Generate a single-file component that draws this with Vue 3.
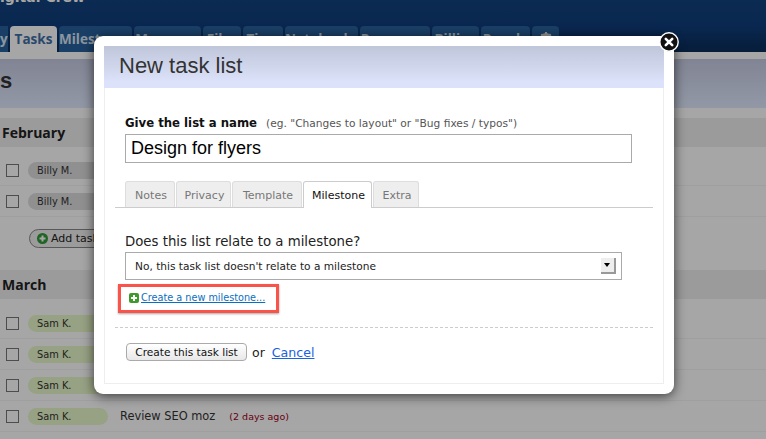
<script setup>
const tabs = [
  { label: 'y', width: 8 },
  { label: 'Tasks', width: 47, active: true },
  { label: 'Milestones', width: 73 },
  { label: 'Messages', width: 67 },
  { label: 'Files', width: 38 },
  { label: 'Time', width: 40 },
  { label: 'Notebooks', width: 73 },
  { label: 'Resources', width: 70 },
  { label: 'Billing', width: 47 },
  { label: 'People', width: 49 }
]

const modalTabs = [
  { label: 'Notes', width: 50 },
  { label: 'Privacy', width: 55 },
  { label: 'Template', width: 70 },
  { label: 'Milestone', width: 69, active: true },
  { label: 'Extra', width: 46 }
]
</script>

<template>
  <div class="page">
    <header class="top">
      <div class="brand">igital Crew</div>
      <nav class="tabs">
        <a
          v-for="t in tabs"
          :key="t.label"
          class="tab"
          :class="{ active: t.active, stub: t.label === 'y' }"
          :style="{ width: t.width + 'px' }"
        >{{ t.label }}</a>
        <a class="tab gear">
          <svg width="14" height="14" viewBox="0 0 14 14">
            <circle cx="7" cy="7" r="4.5" fill="none" stroke="#e4e4e4" stroke-width="3" />
            <path d="M6 0h2v3H6zM6 11h2v3H6zM0 6h3v2H0zM11 6h3v2h-3zM1.500 3L3 1.500 5 3.500 3.500 5zM9 3l2-1.500L12.500 3 11 5z" fill="#e4e4e4" />
          </svg>
        </a>
      </nav>
    </header>

    <div class="title-band">s</div>

    <h3 class="month feb">February</h3>
    <div class="row"><span class="check"></span><span class="pill">Billy M.</span></div>
    <div class="row"><span class="check"></span><span class="pill">Billy M.</span></div>
    <div class="add-wrap">
      <span class="add-task">
        <svg width="11" height="11" viewBox="0 0 11 11">
          <circle cx="5.500" cy="5.500" r="5.500" fill="#2f9a35" />
          <path d="M4.500 2.500h2v2h2v2h-2v2h-2v-2h-2v-2h2z" fill="#fff" />
        </svg>
        Add task
      </span>
    </div>

    <h3 class="month">March</h3>
    <div class="rows">
      <div class="row"><span class="check"></span><span class="pill sam">Sam K.</span></div>
      <div class="row"><span class="check"></span><span class="pill sam">Sam K.</span></div>
      <div class="row"><span class="check"></span><span class="pill sam">Sam K.</span></div>
      <div class="row">
        <span class="check"></span><span class="pill sam">Sam K.</span>
        <span class="task">Review SEO moz</span>
        <span class="late">(2 days ago)</span>
      </div>
    </div>

    <div class="overlay"></div>

    <div class="modal">
      <a class="close">
        <svg width="20" height="20" viewBox="0 0 20 20">
          <circle cx="10" cy="10" r="9.200" fill="#111" stroke="#fff" stroke-width="1.400" />
          <path d="M6.800 6.800l6.400 6.400M13.200 6.800l-6.400 6.400" stroke="#fff" stroke-width="2.600" stroke-linecap="round" />
        </svg>
      </a>
      <div class="inner">
        <h2 class="modal-head">New task list</h2>
        <div class="body">
          <div class="name-label">
            <b>Give the list a name</b>
            <span class="hint">(eg. "Changes to layout" or "Bug fixes / typos")</span>
          </div>
          <input class="name-input" value="Design for flyers" />

          <div class="modal-tabs">
            <a
              v-for="t in modalTabs"
              :key="t.label"
              class="modal-tab"
              :class="{ active: t.active }"
              :style="{ width: t.width + 'px' }"
            >{{ t.label }}</a>
          </div>

          <div class="question">Does this list relate to a milestone?</div>
          <div class="select-wrap">
            <select class="select">
              <option>No, this task list doesn't relate to a milestone</option>
            </select>
            <span class="arrow"></span>
          </div>

          <div class="highlight">
            <svg width="10" height="10" viewBox="0 0 10 10">
              <rect width="10" height="10" rx="2" fill="#3f9a2b" />
              <path d="M4 2h2v2h2v2H6v2H4V6H2V4h2z" fill="#fff" />
            </svg>
            <a class="new-link">Create a new milestone...</a>
          </div>

          <div class="actions">
            <button class="submit">Create this task list</button>
            <span class="or">or</span>
            <a class="cancel">Cancel</a>
          </div>
        </div>
      </div>
    </div>
  </div>
</template>

<style>
html, body {
  margin: 0;
  background: #fff;
}
</style>

<style scoped>
.page {
  position: relative;
  width: 766px;
  height: 439px;
  overflow: hidden;
  background: #fff;
  font-family: "DejaVu Sans", sans-serif;
  color: #222;
}

.top {
  height: 52px;
  background: linear-gradient(#12427f, #0f3d7b 50%, #0b2d59);
  overflow: hidden;
}

.brand {
  margin-top: -11px;
  height: 37px;
  font-size: 14px;
  line-height: 16px;
  font-weight: bold;
  color: #fff;
}

.tabs {
  display: flex;
  gap: 2px;
  height: 26px;
}

.tab {
  box-sizing: border-box;
  height: 26px;
  border-radius: 4px 4px 0 0;
  background: #28619d;
  color: #d8e6f6;
  font-family: "Open Sans", sans-serif;
  font-size: 13.500px;
  font-weight: bold;
  line-height: 27px;
  text-align: center;
  white-space: nowrap;
  overflow: hidden;
}

.tab.active {
  background: #fff;
  color: #3f6fa8;
}

.tab.stub {
  border-radius: 0;
  text-align: right;
  padding-right: 1px;
}

.gear {
  width: 27px;
  padding-top: 6px;
  line-height: 0;
}

.title-band {
  box-sizing: border-box;
  margin-top: 7px;
  height: 49px;
  background: linear-gradient(#c5cbe3, #e2eaff);
  font-family: "Liberation Sans", sans-serif;
  font-size: 22px;
  font-weight: bold;
  line-height: 44px;
  color: #333;
}

.month {
  margin: 10px 0 0;
  height: 29px;
  padding-left: 2px;
  background: #eeeeee;
  font-family: "Open Sans", sans-serif;
  font-size: 14px;
  line-height: 30px;
  font-weight: bold;
  color: #222;
}

.feb {
  margin-bottom: 8px;
}

.rows {
  margin-top: 9px;
}

.row {
  display: flex;
  align-items: center;
  box-sizing: border-box;
  height: 31px;
  border-bottom: 1px solid #f4f4f4;
  padding-left: 6px;
  font-size: 13px;
}

.check {
  box-sizing: border-box;
  width: 13px;
  height: 13px;
  border: 1px solid #777;
  background: #fff;
}

.pill {
  box-sizing: border-box;
  width: 80px;
  height: 17px;
  margin-left: 9px;
  padding-left: 9px;
  border-radius: 9px;
  background: #dedede;
  font-size: 9.800px;
  line-height: 17px;
  color: #333;
}

.pill.sam {
  background: #e8f8ca;
}

.task {
  margin-left: 12px;
  font-size: 11.400px;
  color: #333;
}

.late {
  margin-left: 14px;
  font-size: 9.500px;
  color: #a00018;
}

.add-wrap {
  height: 43px;
  padding: 12px 0 0 29px;
  box-sizing: border-box;
}

.add-task {
  display: flex;
  align-items: center;
  gap: 3px;
  box-sizing: border-box;
  width: 90px;
  height: 19px;
  padding-left: 7px;
  border: 1px solid #888;
  border-radius: 10px;
  background: #eee;
  font-size: 11px;
}

.overlay {
  position: absolute;
  inset: 0;
  background: rgba(0, 0, 0, 0.35);
}

.modal {
  position: absolute;
  left: 94px;
  top: 36px;
  box-sizing: border-box;
  width: 580px;
  height: 358px;
  padding: 10px;
  background: #fff;
  border-radius: 9px;
  box-shadow: 0 2px 12px rgba(0, 0, 0, 0.65);
}

.close {
  position: absolute;
  right: -5px;
  top: -4px;
  width: 20px;
  height: 20px;
  line-height: 0;
}

.inner {
  box-sizing: border-box;
  height: 338px;
  border: 1px solid #eee;
  border-top: 0;
}

.modal-head {
  box-sizing: border-box;
  height: 42px;
  margin: 0 -1px;
  padding-left: 15px;
  background: linear-gradient(#c0c6da, #dbe2f9 85%);
  font-family: "Liberation Sans", sans-serif;
  font-size: 22px;
  font-weight: normal;
  line-height: 40px;
  color: #333;
}

.body {
  padding: 27px 10px 0;
}

.name-label {
  margin-left: 10px;
  height: 19px;
  font-size: 11.700px;
  line-height: 16px;
  color: #111;
}

.hint {
  margin-left: 9px;
  font-size: 10.650px;
  color: #555;
}

.name-input {
  display: block;
  box-sizing: border-box;
  width: 507px;
  height: 29px;
  margin-left: 10px;
  padding: 0 5px;
  border: 1px solid #aaa;
  border-radius: 0;
  outline: none;
  font-family: "Liberation Sans", sans-serif;
  font-size: 18px;
  color: #000;
}

.modal-tabs {
  display: flex;
  gap: 1px;
  margin-top: 18px;
  padding-left: 10px;
  height: 27px;
  border-bottom: 1px solid #ccc;
  box-sizing: border-box;
}

.modal-tab {
  box-sizing: border-box;
  height: 26px;
  padding-left: 2px;
  border: 1px solid #ddd;
  border-bottom: 0;
  border-radius: 3px 3px 0 0;
  background: #eee;
  color: #777;
  font-size: 11px;
  line-height: 27px;
  text-align: center;
}

.modal-tab.active {
  height: 27px;
  border-color: #ccc;
  background: #fff;
  color: #111;
}

.question {
  margin: 26px 0 0 10px;
  height: 18px;
  font-size: 13.300px;
  line-height: 16px;
  color: #222;
}

.select-wrap {
  position: relative;
  width: 497px;
  margin-left: 10px;
}

.select {
  display: block;
  box-sizing: border-box;
  width: 100%;
  height: 28px;
  padding: 0 0 0 9px;
  border: 1px solid #aaa;
  border-radius: 0;
  background: #fff;
  appearance: none;
  font-family: "DejaVu Sans", sans-serif;
  font-size: 10.600px;
  color: #222;
}

.arrow {
  position: absolute;
  left: 476px;
  top: 6px;
  box-sizing: border-box;
  width: 15px;
  height: 16px;
  background: #eee;
  border-right: 2px solid #999;
  border-bottom: 2px solid #999;
}

.arrow::after {
  content: "";
  position: absolute;
  left: 3px;
  top: 5px;
  border: 3.500px solid transparent;
  border-top: 4px solid #000;
  border-bottom: 0;
}

.highlight {
  display: flex;
  align-items: center;
  gap: 2px;
  box-sizing: border-box;
  width: 161px;
  height: 29px;
  margin: 4px 0 0 3px;
  padding: 0 0 2px 8px;
  border: 3px solid #f9534a;
  box-shadow: 0 1px 2px rgba(0, 0, 0, 0.35);
}

.new-link {
  font-size: 9.700px;
  color: #0b6fc0;
  text-decoration: underline;
}

.actions {
  display: flex;
  align-items: center;
  margin-top: 14px;
  padding: 15px 0 0 11px;
  border-top: 1px dashed #ccc;
}

.submit {
  box-sizing: border-box;
  width: 121px;
  height: 18px;
  padding: 0;
  border: 1px solid #aaa;
  border-radius: 4px;
  background: linear-gradient(#fff, #e8e8e8);
  font-family: "DejaVu Sans", sans-serif;
  font-size: 10.600px;
  line-height: 15px;
  color: #111;
}

.or {
  margin-left: 5px;
  font-size: 12.500px;
  color: #222;
}

.cancel {
  margin-left: 7px;
  font-size: 12.600px;
  color: #1a62e0;
  text-decoration: underline;
}
</style>
